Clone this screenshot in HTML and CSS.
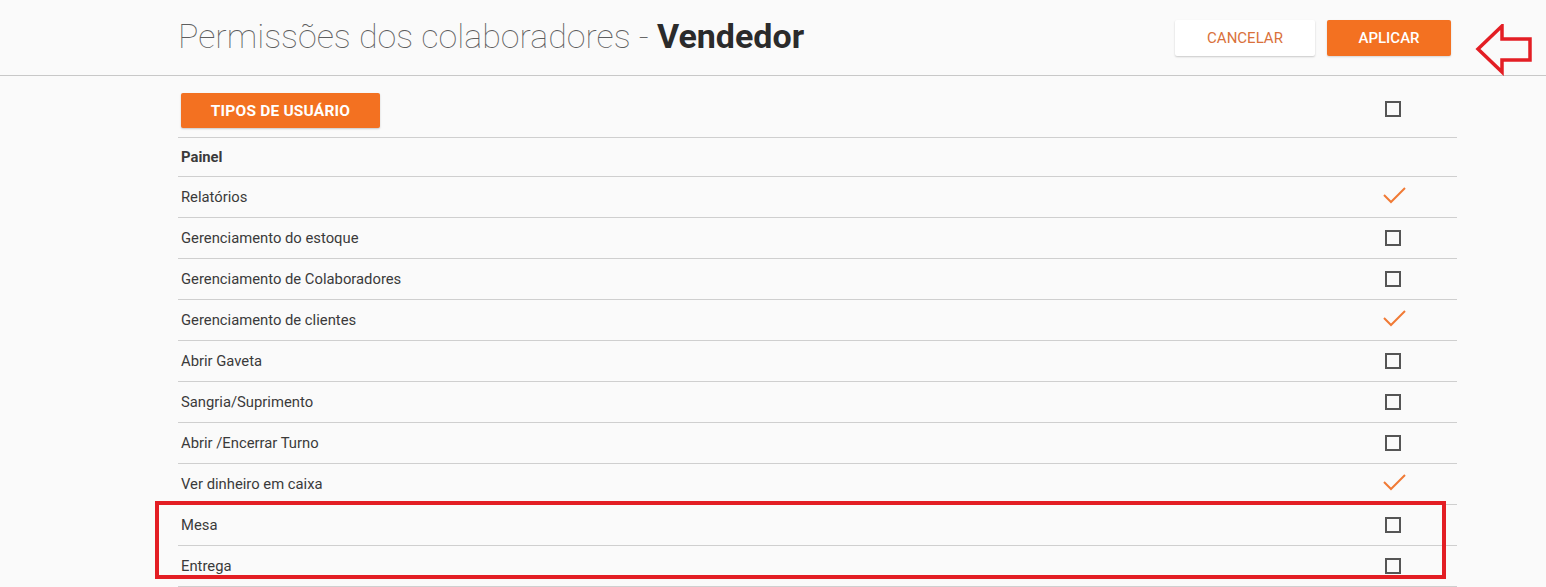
FILE: index.html
```html
<!DOCTYPE html>
<html lang="pt-BR">
<head>
    <meta charset="UTF-8">
    <meta name="viewport" content="width=device-width, initial-scale=1.0">
    <title>Permissões dos colaboradores - Vendedor</title>
    <link rel="stylesheet" href="styles.css">
</head>
<body>
    <header class="topbar">
        <div class="topbar-inner">
            <h1 class="title">Permissões dos colaboradores - <strong>Vendedor</strong></h1>
            <div class="actions">
                <button class="btn btn-cancel">Cancelar</button>
                <button class="btn btn-apply">Aplicar</button>
            </div>
        </div>
        <svg class="arrow" width="60" height="52" viewBox="0 0 60 52">
            <path d="M3 25 L27 2 L27 15 L55 15 L55 36 L27 36 L27 48 Z" fill="none" stroke="#e31e24" stroke-width="3.5" stroke-linejoin="miter"/>
        </svg>
    </header>

    <main class="perms">
        <div class="row row-head">
            <div><button class="btn btn-types">Tipos de usuário</button></div>
            <div class="cell-check"><span class="box"></span></div>
        </div>
        <div class="row row-group">
            <div>Painel</div>
            <div class="cell-check"></div>
        </div>
        <div class="row">
            <div>Relatórios</div>
            <div class="cell-check"><svg class="tick" width="24" height="20" viewBox="0 0 24 20"><path d="M1 9 L8 16 L22 2" fill="none" stroke="#f07a35" stroke-width="2"/></svg></div>
        </div>
        <div class="row">
            <div>Gerenciamento do estoque</div>
            <div class="cell-check"><span class="box"></span></div>
        </div>
        <div class="row">
            <div>Gerenciamento de Colaboradores</div>
            <div class="cell-check"><span class="box"></span></div>
        </div>
        <div class="row">
            <div>Gerenciamento de clientes</div>
            <div class="cell-check"><svg class="tick" width="24" height="20" viewBox="0 0 24 20"><path d="M1 9 L8 16 L22 2" fill="none" stroke="#f07a35" stroke-width="2"/></svg></div>
        </div>
        <div class="row">
            <div>Abrir Gaveta</div>
            <div class="cell-check"><span class="box"></span></div>
        </div>
        <div class="row">
            <div>Sangria/Suprimento</div>
            <div class="cell-check"><span class="box"></span></div>
        </div>
        <div class="row">
            <div>Abrir /Encerrar Turno</div>
            <div class="cell-check"><span class="box"></span></div>
        </div>
        <div class="row">
            <div>Ver dinheiro em caixa</div>
            <div class="cell-check"><svg class="tick" width="24" height="20" viewBox="0 0 24 20"><path d="M1 9 L8 16 L22 2" fill="none" stroke="#f07a35" stroke-width="2"/></svg></div>
        </div>
        <div class="row">
            <div>Mesa</div>
            <div class="cell-check"><span class="box"></span></div>
        </div>
        <div class="row">
            <div>Entrega</div>
            <div class="cell-check"><span class="box"></span></div>
        </div>
        <div class="highlight"></div>
    </main>
</body>
</html>
```

FILE: styles.css
```css
body {
    margin: 0;
    background: #fafafa;
    font-family: Roboto, "Liberation Sans", sans-serif;
    color: #333;
    overflow: hidden;
}

.topbar {
    position: relative;
    height: 75px;
    border-bottom: 1px solid #c8c8c8;
}

.topbar-inner {
    margin-left: 178px;
    width: 1273px;
    height: 75px;
    display: flex;
    align-items: center;
    justify-content: space-between;
}

.title {
    margin: 0 0 4px 0;
    font-size: 34px;
    font-weight: 100;
    color: #5e5e5e;
}

.title strong {
    font-weight: 700;
    color: #2b2b2b;
}

.actions {
    display: flex;
    gap: 12px;
}

.btn {
    font-family: Roboto, "Liberation Sans", sans-serif;
    font-size: 15px;
    text-transform: uppercase;
    border: none;
    border-radius: 2px;
    cursor: pointer;
    height: 36px;
}

.btn-cancel {
    width: 140px;
    background: #fff;
    color: #d9713b;
    box-shadow: 0 1px 2px rgba(0, 0, 0, 0.2);
}

.btn-apply {
    width: 124px;
    background: #f37121;
    color: #fff;
    font-weight: 500;
    box-shadow: 0 1px 2px rgba(0, 0, 0, 0.15);
}

.arrow {
    position: absolute;
    left: 1475px;
    top: 24px;
}

.perms {
    position: relative;
    margin-left: 178px;
    width: 1279px;
}

.row {
    display: grid;
    grid-template-columns: 1fr 126px;
    align-items: center;
    height: 40px;
    padding-left: 3px;
    border-bottom: 1px solid #cfcfcf;
    font-size: 14.8px;
    color: #3a3a3a;
}

.row-head {
    height: 61px;
}

.row-group {
    height: 38px;
    font-weight: 700;
}

.btn-types {
    width: 199px;
    height: 35px;
    margin-top: 8px;
    background: #f37121;
    color: #fff;
    font-weight: 700;
    font-size: 15.5px;
    letter-spacing: 0.2px;
    box-shadow: 0 1px 2px rgba(0, 0, 0, 0.2);
}

.cell-check {
    display: flex;
    justify-content: center;
    align-items: center;
}

.box {
    display: block;
    width: 12px;
    height: 12px;
    border: 2px solid #555;
    margin-right: 3px;
}

.row-head .box {
    margin-top: 5px;
}

.tick {
    display: block;
    margin-left: 2px;
    margin-top: -2px;
}

.highlight {
    position: absolute;
    left: -23px;
    top: 425px;
    width: 1283px;
    height: 70px;
    border: 4px solid #e31e24;
}
```
